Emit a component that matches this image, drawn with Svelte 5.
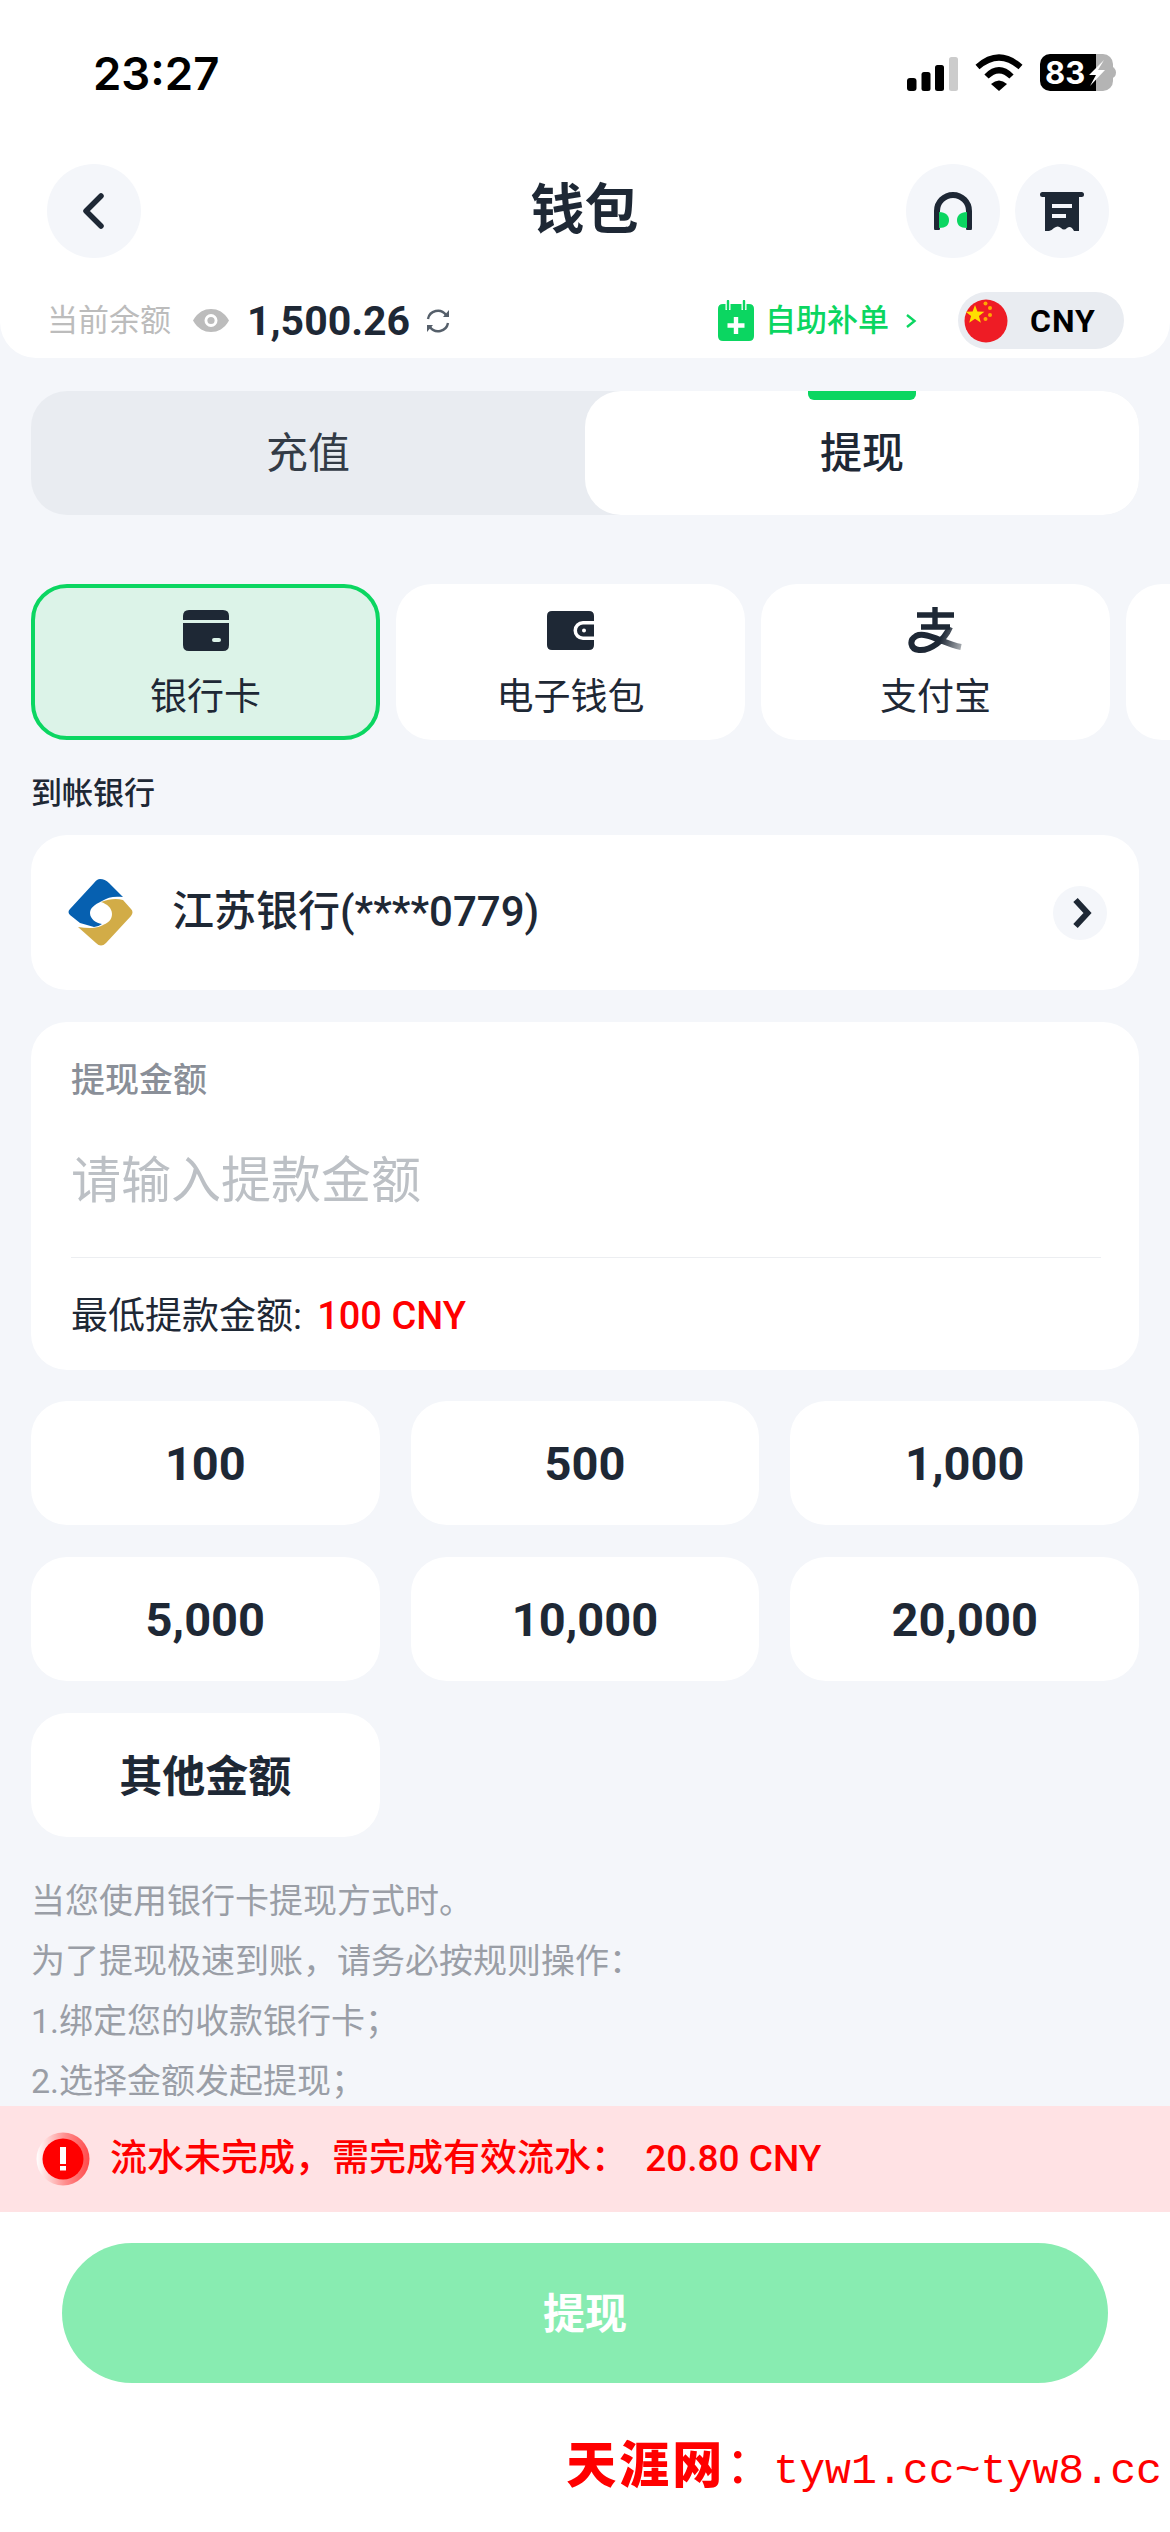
<script>
  const methods = [
    { name: '银行卡', icon: 'card', active: true },
    { name: '电子钱包', icon: 'wallet', active: false },
    { name: '支付宝', icon: 'alipay', active: false },
    { name: '', icon: '', active: false }
  ];
  const amounts = [
    { t: '100' }, { t: '500' }, { t: '1,000' },
    { t: '5,000' }, { t: '10,000' }, { t: '20,000' },
    { t: '其他金额', cjk: true }
  ];
  const rules = [
    '当您使用银行卡提现方式时。',
    '为了提现极速到账，请务必按规则操作：',
    '1.绑定您的收款银行卡；',
    '2.选择金额发起提现；'
  ];
</script>

<div class="page">
  <header class="head">
    <div class="status">
      <span class="time">23:27</span>
      <div class="sys">
        <svg class="signal" viewBox="0 0 51 34" aria-hidden="true">
          <rect x="0" y="21" width="9.5" height="13" rx="3" fill="#000" />
          <rect x="14.5" y="15" width="9" height="19" rx="2.5" fill="#000" />
          <rect x="28" y="8" width="9" height="26" rx="2.5" fill="#000" />
          <rect x="42" y="0" width="9" height="34" rx="2.5" fill="#ccc" />
        </svg>
        <svg class="wifi" viewBox="0 0 48 37" aria-hidden="true">
          <path d="M2.5 13 Q24 -6 45.5 13" fill="none" stroke="#000" stroke-width="6" />
          <path d="M11.5 22.5 Q24 10 36.5 22.5" fill="none" stroke="#000" stroke-width="6" />
          <path d="M16 30 Q24 23 32 30 L24 37 Z" fill="#000" />
        </svg>
        <div class="batt">
          <svg viewBox="0 0 76 37" aria-hidden="true">
            <defs><clipPath id="bc"><rect width="73" height="37" rx="10" /></clipPath></defs>
            <g clip-path="url(#bc)">
              <rect width="56" height="37" fill="#000" />
              <rect x="56" width="17" height="37" fill="#b4b4b4" />
            </g>
            <path d="M71 12 Q76 14 76 18.5 Q76 23 71 25 Z" fill="#b4b4b4" />
          </svg>
          <span class="batt-t">83</span>
          <svg class="bolt" viewBox="0 0 76 37" aria-hidden="true">
            <path d="M64 6 L49 21 H56 L50 32 L65 16 H58 Z" fill="#fff" />
          </svg>
        </div>
      </div>
    </div>

    <nav class="nav">
      <div class="nav-l">
        <span class="circle">
          <svg class="back" viewBox="0 0 22 36" aria-hidden="true"><path d="M19 3 L4 18 L19 33" fill="none" stroke="#1e2835" stroke-width="5.5" stroke-linecap="round" stroke-linejoin="round" /></svg>
        </span>
      </div>
      <h1 class="title">钱包</h1>
      <div class="nav-r">
        <span class="circle">
          <svg class="ico40" viewBox="0 0 40 38" aria-hidden="true">
            <path d="M4 36 V19 A16 16 0 0 1 36 19 V36" fill="none" stroke="#1e2835" stroke-width="6" stroke-linecap="round" />
            <path d="M6 20 C13 20 16 24 16 28 C16 33 13 36 6 36 Z" fill="#0bd661" />
            <path d="M34 20 C27 20 24 24 24 28 C24 33 27 36 34 36 Z" fill="#0bd661" />
          </svg>
        </span>
        <span class="circle">
          <svg class="ico44" viewBox="0 0 44 39" aria-hidden="true">
            <rect x="0" y="0" width="44" height="5" rx="2.5" fill="#1e2835" />
            <path d="M5 4 H39 V39 H34 Q31 33 27 36 Q24 39 21 36 Q18 33 14 36 Q11 39 9 39 H5 Z" fill="#1e2835" />
            <rect x="12" y="12" width="20" height="4" fill="#f4f6fa" />
            <rect x="12" y="22" width="14" height="4" fill="#f4f6fa" />
          </svg>
        </span>
      </div>
    </nav>

    <div class="bal">
      <div class="bal-l">
        <span class="bal-label">当前余额</span>
        <svg class="eye" viewBox="0 0 36 23" aria-hidden="true">
          <path fill-rule="evenodd" d="M0 11.5 C5 3 11 0 18 0 C25 0 31 3 36 11.5 C31 20 25 23 18 23 C11 23 5 20 0 11.5 Z M18 5 A6.5 6.5 0 1 0 18 18 A6.5 6.5 0 1 0 18 5 Z" fill="#bcbcbc" />
          <circle cx="18" cy="11.5" r="3.6" fill="#bcbcbc" />
        </svg>
        <span class="bal-num">1,500.26</span>
        <svg class="refresh" viewBox="0 0 26 24" aria-hidden="true">
          <path d="M3 10 A10 10 0 0 1 21 6" fill="none" stroke="#555f6a" stroke-width="2.4" />
          <path d="M23 14 A10 10 0 0 1 5 18" fill="none" stroke="#555f6a" stroke-width="2.4" />
          <path d="M24 1 V8 H18 Z" fill="#555f6a" />
          <path d="M2 23 V16 H8 Z" fill="#555f6a" />
        </svg>
      </div>
      <div class="bal-r">
        <svg class="cal" viewBox="0 0 36 41" aria-hidden="true">
          <path fill-rule="evenodd" d="M5 4 H31 Q36 4 36 9 V36 Q36 41 31 41 H5 Q0 41 0 36 V9 Q0 4 5 4 Z" fill="#0bd661" />
          <path d="M10 0 V10 M26 0 V10" stroke="#fff" stroke-width="5" />
          <path d="M10 1 V9 M26 1 V9" stroke="#0bd661" stroke-width="2.4" stroke-linecap="round" />
          <path d="M18 17 V34 M9.5 25.5 H26.5" stroke="#fff" stroke-width="4.4" />
        </svg>
        <span class="self">自助补单</span>
        <svg class="gt" viewBox="0 0 12 16" aria-hidden="true"><path d="M2 2 L9.5 8 L2 14" fill="none" stroke="#0bd661" stroke-width="2.4" /></svg>
        <div class="pill">
          <svg class="flag" viewBox="0 0 44 44" aria-hidden="true">
            <circle cx="22" cy="22" r="21.5" fill="#ee1c25" />
            <path d="M11 6 L13.4 12.6 L20.4 12.8 L14.9 17 L16.9 23.7 L11 19.8 L5.2 23.7 L7.1 17 L1.6 12.8 L8.6 12.6 Z" fill="#ffde00" />
            <circle cx="21.5" cy="4.5" r="2" fill="#ffa800" />
            <circle cx="26" cy="9" r="2" fill="#ffa800" />
            <circle cx="26" cy="16" r="2" fill="#ffa800" />
            <circle cx="21.5" cy="20" r="2" fill="#ffa800" />
          </svg>
          <span class="cny">CNY</span>
        </div>
      </div>
    </div>
  </header>

  <main class="main">
    <div class="tabs">
      <div class="tab">充值</div>
      <div class="tab on"><span class="mark"></span>提现</div>
    </div>

    <div class="methods">
      {#each methods as m}
        <div class="method" class:sel={m.active}>
          {#if m.icon === 'card'}
            <svg class="m-card" viewBox="0 0 46 41" aria-hidden="true">
              <path d="M0 10 V6 Q0 0 6 0 H40 Q46 0 46 6 V10 Z" fill="#1e2835" />
              <path fill-rule="evenodd" d="M0 13 H46 V35 Q46 41 40 41 H6 Q0 41 0 35 Z M31 28 Q29 28 29 30 Q29 32 31 32 H36 Q38 32 38 30 Q38 28 36 28 Z" fill="#1e2835" />
            </svg>
          {:else if m.icon === 'wallet'}
            <svg class="m-wallet" viewBox="0 0 47 39" aria-hidden="true">
              <path fill-rule="evenodd" d="M5 0 H42 Q47 0 47 5 V10 H36 A9.5 9.5 0 0 0 36 29 H47 V34 Q47 39 42 39 H5 Q0 39 0 34 V5 Q0 0 5 0 Z" fill="#1e2835" />
              <path fill-rule="evenodd" d="M36 13.5 H47 V25.5 H36 A6 6 0 0 1 36 13.5 Z M37 17.5 A2 2 0 1 0 37 21.5 A2 2 0 1 0 37 17.5 Z" fill="#1e2835" />
            </svg>
          {:else if m.icon === 'alipay'}
            <svg class="m-ali" viewBox="0 0 56 47" aria-hidden="true">
              <defs>
                <linearGradient id="af" x1="20" y1="30" x2="54" y2="42" gradientUnits="userSpaceOnUse">
                  <stop offset="0.35" stop-color="#1e2835" />
                  <stop offset="1" stop-color="#1e2835" stop-opacity="0.35" />
                </linearGradient>
              </defs>
              <path d="M9 8 H46 M27 0 V20 M13 20 H42" fill="none" stroke="#1e2835" stroke-width="5.4" />
              <path d="M42 20 C36 34 22 44 11 43 C2 42 1 33 8 29 C18 24 34 36 53 40" fill="none" stroke="url(#af)" stroke-width="6" />
            </svg>
          {/if}
          {#if m.name}<span class="m-name">{m.name}</span>{/if}
        </div>
      {/each}
    </div>

    <div class="sub">到帐银行</div>

    <div class="bank">
      <svg class="logo" viewBox="0 0 66 68" aria-hidden="true">
        <path d="M32 0 Q37 0 41 4 L55 18 C46 17 40 18 34 22 C26 26 22 29 22 34 C22 40 28 44 34 45 Q30 48 26 48 L12 44 L2 36 Q-1 33 2 30 L26 4 Q29 0 32 0 Z" fill="#0660b0" />
        <path d="M63 30 Q66 33 63 37 L38 64 Q33 69 28 64 L10 48 C18 49 26 50 33 47 C40 44 44 41 44 35 C44 29 39 25 33 23 C41 20 48 19 55 21 Z" fill="#d2ac47" />
      </svg>
      <span class="bank-name">江苏银行(****0779)</span>
      <span class="bank-go">
        <svg viewBox="0 0 20 32" aria-hidden="true"><path d="M3.5 3 L15.5 16 L3.5 29" fill="none" stroke="#1e2835" stroke-width="6" /></svg>
      </span>
    </div>

    <section class="amt">
      <div class="amt-label">提现金额</div>
      <div class="amt-input">请输入提款金额</div>
      <div class="amt-line"></div>
      <div class="amt-min">最低提款金额: <b>100 CNY</b></div>
    </section>

    <div class="grid">
      {#each amounts as a}
        <div class="chip" class:cjk={a.cjk}>{a.t}</div>
      {/each}
    </div>

    <div class="rules">
      {#each rules as r}
        <p>{r}</p>
      {/each}
    </div>
  </main>

  <footer class="foot">
    <div class="alert">
      <svg class="warn" viewBox="0 0 54 54" aria-hidden="true">
        <defs>
          <linearGradient id="wg" x1="0" y1="0" x2="1" y2="0">
            <stop offset="0" stop-color="#ffffff" />
            <stop offset="0.55" stop-color="#ff8c8c" />
            <stop offset="1" stop-color="#ff4a4a" />
          </linearGradient>
        </defs>
        <circle cx="27" cy="27" r="26.5" fill="url(#wg)" />
        <circle cx="27" cy="27" r="20.5" fill="#ff0000" />
        <rect x="24" y="15" width="6" height="17" fill="#fff" />
        <rect x="24" y="34" width="6" height="4.5" fill="#fff" />
      </svg>
      <span class="alert-t">流水未完成，需完成有效流水： <b>20.80 CNY</b></span>
    </div>
    <div class="submit">提现</div>
    <div class="mark-site">
      <span class="site-a">天涯网</span><span class="site-c">：</span><span class="site-b">tyw1.cc~tyw8.cc</span>
    </div>
  </footer>
</div>

<style>
  :global(body) {
    margin: 0;
    background: #fff;
  }
  .page {
    width: 1170px;
    height: 2532px;
    display: flex;
    flex-direction: column;
    overflow: hidden;
    background: #f4f6fa;
    color: #1e2835;
    font-family: Roboto, "Noto Sans CJK SC", sans-serif;
  }
  .head {
    height: 358px;
    flex: none;
    box-sizing: border-box;
    background: #fff;
    border-radius: 0 0 36px 36px;
  }
  .status {
    height: 164px;
    box-sizing: border-box;
    padding: 47px 54px 0 93px;
    display: flex;
    justify-content: space-between;
    align-items: flex-start;
  }
  .time {
    font-family: Inter, sans-serif;
    font-weight: 600;
    font-size: 45.5px;
    line-height: 54px;
    color: #000;
  }
  .sys {
    display: flex;
    align-items: center;
    height: 54px;
    margin-top: -2px;
  }
  .signal { width: 51px; height: 34px; margin-top: 3px; }
  .wifi { width: 48px; height: 37px; margin-left: 17px; }
  .batt {
    width: 76px;
    height: 37px;
    margin-left: 17px;
    position: relative;
  }
  .batt svg { display: block; width: 76px; height: 37px; }
  .batt .bolt { position: absolute; left: 0; top: 0; }
  .batt-t {
    position: absolute;
    left: 5px;
    top: 0;
    font-family: Inter, sans-serif;
    font-weight: 700;
    font-size: 31px;
    line-height: 37px;
    color: #fff;
  }
  .nav {
    height: 94px;
    padding: 0 61px 0 47px;
    display: grid;
    grid-template-columns: 1fr auto 1fr;
    align-items: center;
  }
  .nav-l { display: flex; }
  .nav-r { display: flex; justify-content: flex-end; gap: 15px; }
  .circle {
    width: 94px;
    height: 94px;
    border-radius: 50%;
    background: #f4f6fa;
    display: flex;
    align-items: center;
    justify-content: center;
  }
  .back { width: 22px; height: 36px; margin-left: -2px; }
  .ico40 { width: 40px; height: 38px; }
  .ico44 { width: 44px; height: 39px; }
  .title {
    margin: 0 0 0 13px;
    font-size: 54px;
    line-height: 70px;
    font-weight: 700;
    color: #1e2835;
  }
  .bal {
    margin-top: 34px;
    height: 57px;
    padding: 0 46px 0 47px;
    display: flex;
    align-items: center;
    justify-content: space-between;
  }
  .bal-l, .bal-r { display: flex; align-items: center; }
  .bal-label { font-size: 31px; line-height: 40px; color: #bcbcbc; }
  .eye { width: 36px; height: 23px; margin-left: 22px; }
  .bal-num { font-size: 41px; font-weight: 700; margin-left: 18px; line-height: 50px; }
  .refresh { width: 26px; height: 24px; margin-left: 15px; }
  .cal { width: 36px; height: 41px; }
  .self { font-size: 31px; font-weight: 500; color: #0bd661; margin-left: 11px; line-height: 40px; }
  .gt { width: 12px; height: 16px; margin-left: 16px; }
  .pill {
    width: 166px;
    height: 57px;
    margin-left: 41px;
    border-radius: 29px;
    background: #e9ecf1;
    display: flex;
    align-items: center;
    box-sizing: border-box;
    padding-left: 6px;
  }
  .flag { width: 44px; height: 44px; }
  .cny { font-size: 32px; font-weight: 700; color: #000; margin-left: 22px; letter-spacing: 1px; }

  .main {
    flex: 1;
    min-height: 0;
    overflow: hidden;
    padding: 33px 31px 0;
  }
  .tabs {
    height: 124px;
    display: flex;
    background: #e9ecf1;
    border-radius: 36px;
  }
  .tab {
    flex: 1;
    display: flex;
    align-items: center;
    justify-content: center;
    font-size: 42px;
    color: #333b46;
    position: relative;
    padding-bottom: 8px;
    box-sizing: border-box;
  }
  .tab.on {
    background: #fff;
    border-radius: 36px;
    font-weight: 500;
    color: #1e2835;
  }
  .mark {
    position: absolute;
    top: 0;
    left: 50%;
    width: 108px;
    height: 9px;
    margin-left: -54px;
    background: #0bd661;
    border-radius: 0 0 6px 6px;
  }
  .methods {
    margin-top: 69px;
    margin-right: -31px;
    display: flex;
    gap: 16px;
    height: 156px;
    overflow: hidden;
  }
  .method {
    flex: none;
    width: 349px;
    height: 156px;
    box-sizing: border-box;
    background: #fff;
    border-radius: 36px;
    display: flex;
    flex-direction: column;
    align-items: center;
    position: relative;
    padding-top: 26px;
  }
  .method.sel {
    background: #dcf3e8;
    border: 4px solid #0bd661;
    padding-top: 22px;
  }
  .m-card { width: 46px; height: 41px; }
  .m-wallet { width: 47px; height: 39px; margin-top: 1px; margin-bottom: 1px; }
  .m-ali { width: 56px; height: 47px; margin-top: -3px; margin-bottom: -3px; }
  .m-name {
    font-size: 37px;
    line-height: 48px;
    margin-top: 23px;
    color: #1e2835;
  }
  .sub {
    margin-top: 34px;
    font-size: 31px;
    line-height: 40px;
    font-weight: 500;
    color: #1e2835;
  }
  .bank {
    margin-top: 21px;
    height: 155px;
    background: #fff;
    border-radius: 36px;
    display: flex;
    align-items: center;
    padding: 0 32px 0 37px;
  }
  .logo { width: 66px; height: 68px; flex: none; }
  .bank-name {
    margin-left: 38px;
    font-size: 42px;
    font-weight: 500;
    flex: 1;
    line-height: 56px;
    margin-top: -2px;
  }
  .bank-go {
    width: 54px;
    height: 54px;
    border-radius: 50%;
    background: #f4f6fa;
    display: flex;
    align-items: center;
    justify-content: center;
  }
  .bank-go svg { width: 20px; height: 32px; margin-left: 3px; }
  .amt {
    margin-top: 32px;
    height: 348px;
    box-sizing: border-box;
    background: #fff;
    border-radius: 36px;
    padding: 38px 38px 0 40px;
  }
  .amt-label { font-size: 34px; line-height: 40px; font-weight: 500; color: #8a8f98; }
  .amt-input { margin-top: 51px; font-size: 50px; line-height: 60px; color: #bcc0c5; }
  .amt-line { margin-top: 46px; height: 1px; background: #eceef1; }
  .amt-min { margin-top: 36px; font-size: 37px; line-height: 44px; color: #1e2835; }
  .amt-min b { font-weight: 500; font-size: 38px; color: #f00; margin-left: 6px; }
  .grid {
    margin-top: 31px;
    display: grid;
    grid-template-columns: repeat(3, 1fr);
    column-gap: 31px;
    row-gap: 32px;
  }
  .chip {
    height: 124px;
    background: #fff;
    border-radius: 36px;
    display: flex;
    align-items: center;
    justify-content: center;
    font-size: 47px;
    font-weight: 700;
    color: #1e2835;
  }
  .chip.cjk { font-size: 43px; padding-bottom: 4px; box-sizing: border-box; }
  .rules { margin-top: 34px; }
  .rules p {
    margin: 0;
    font-size: 34px;
    line-height: 60px;
    color: #9a9ea6;
  }
  .foot {
    flex: none;
    height: 426px;
    background: #fff;
  }
  .alert {
    height: 106px;
    background: #ffe2e4;
    display: flex;
    align-items: center;
    padding-left: 36px;
  }
  .warn { width: 54px; height: 54px; }
  .alert-t {
    margin-left: 20px;
    font-size: 37px;
    font-weight: 500;
    color: #f00;
    line-height: 48px;
  }
  .alert-t b { font-weight: 500; margin-left: 8px; }
  .submit {
    margin: 31px 62px 0;
    height: 140px;
    border-radius: 70px;
    background: #88ecb1;
    color: #fff;
    font-size: 42px;
    font-weight: 700;
    display: flex;
    align-items: center;
    justify-content: center;
    padding-bottom: 6px;
    box-sizing: border-box;
  }
  .mark-site {
    margin-top: 52px;
    padding-right: 8px;
    display: flex;
    justify-content: flex-end;
    align-items: baseline;
    line-height: 62px;
    color: #f00;
  }
  .site-a { font-size: 50px; font-weight: 900; letter-spacing: 3px; }
  .site-c { font-size: 50px; font-weight: 400; margin-right: -2px; }
  .site-b { font-family: "Liberation Mono", monospace; font-size: 43.2px; }
</style>
